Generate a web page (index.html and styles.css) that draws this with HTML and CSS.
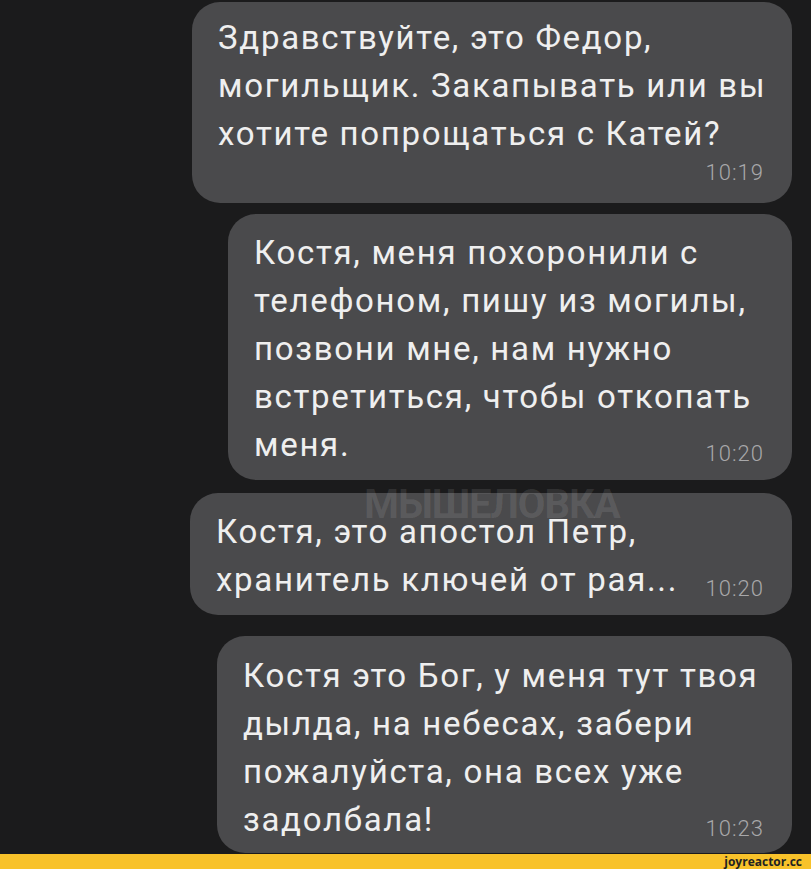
FILE: index.html
```html
<!DOCTYPE html>
<html lang="ru">
<head>
    <meta charset="UTF-8">
    <meta name="viewport" content="width=device-width, initial-scale=1.0">
    <title>Могильщик</title>
    <link rel="stylesheet" href="styles.css">
</head>
<body>
    <div class="chat">
        <div class="bubble bubble--fedor">
            <p class="bubble__text">Здравствуйте, это Федор,<br>могильщик. Закапывать или вы<br>хотите попрощаться с Катей?</p>
            <div class="bubble__foot bubble__foot--alone">
                <span class="bubble__time">10:19</span>
            </div>
        </div>

        <div class="bubble bubble--katya">
            <p class="bubble__text">Костя, меня похоронили с<br>телефоном, пишу из могилы,<br>позвони мне, нам нужно<br>встретиться, чтобы откопать</p>
            <div class="bubble__foot">
                <span class="bubble__text">меня.</span>
                <span class="bubble__time">10:20</span>
            </div>
        </div>

        <div class="bubble bubble--petr">
            <p class="bubble__text">Костя, это апостол Петр,</p>
            <div class="bubble__foot">
                <span class="bubble__text">хранитель ключей от рая...</span>
                <span class="bubble__time">10:20</span>
            </div>
        </div>

        <div class="bubble bubble--god">
            <p class="bubble__text">Костя это Бог, у меня тут твоя<br>дылда, на небесах, забери<br>пожалуйста, она всех уже</p>
            <div class="bubble__foot">
                <span class="bubble__text">задолбала!</span>
                <span class="bubble__time">10:23</span>
            </div>
        </div>

        <div class="watermark">МЫШЕЛОВКА</div>
    </div>
    <div class="footer">joyreactor.cc</div>
</body>
</html>
```

FILE: styles.css
```css
html {
    background-color: #1b1b1c;
}
body {
    margin: 0;
    font-family: Roboto, "Noto Sans", sans-serif;
    color: #efefef;
}
.chat {
    position: relative;
    display: flex;
    flex-direction: column;
    align-items: flex-end;
    padding: 2px 19px 4px 0;
    height: 854px;
    box-sizing: border-box;
}
.bubble {
    background: #4a4a4c;
    border-radius: 28px;
    padding: 12px 28px 11px 26px;
    box-sizing: border-box;
}
.bubble--fedor {
    width: 600px;
    padding-bottom: 15px;
}
.bubble--katya {
    width: 564px;
    margin-top: 11px;
    padding-top: 15px;
}
.bubble--petr {
    width: 602px;
    margin-top: 13px;
    padding-top: 15px;
    padding-bottom: 11px;
}
.bubble--god {
    width: 575px;
    margin-top: 21px;
    padding-top: 16px;
    padding-bottom: 9px;
}
.bubble__text {
    margin: 0;
    font-size: 33px;
    line-height: 48px;
    letter-spacing: 1.7px;
    white-space: nowrap;
}
.bubble__foot {
    display: flex;
    justify-content: space-between;
    align-items: flex-end;
}
.bubble__foot--alone {
    justify-content: flex-end;
}
.bubble__time {
    font-size: 22px;
    font-weight: 300;
    line-height: 30px;
    letter-spacing: 1px;
    color: #a8a8aa;
}
.watermark {
    position: absolute;
    left: 364px;
    top: 481px;
    font-family: Roboto, sans-serif;
    font-weight: 700;
    font-size: 40px;
    letter-spacing: -1px;
    color: rgba(255,255,255,0.1);
    pointer-events: none;
}
.footer {
    background: #f8c22a;
    height: 15px;
    padding-right: 9px;
    text-align: right;
    font-family: "Open Sans", sans-serif;
    font-weight: 700;
    font-size: 12px;
    line-height: 16px;
    color: #222;
}
```
